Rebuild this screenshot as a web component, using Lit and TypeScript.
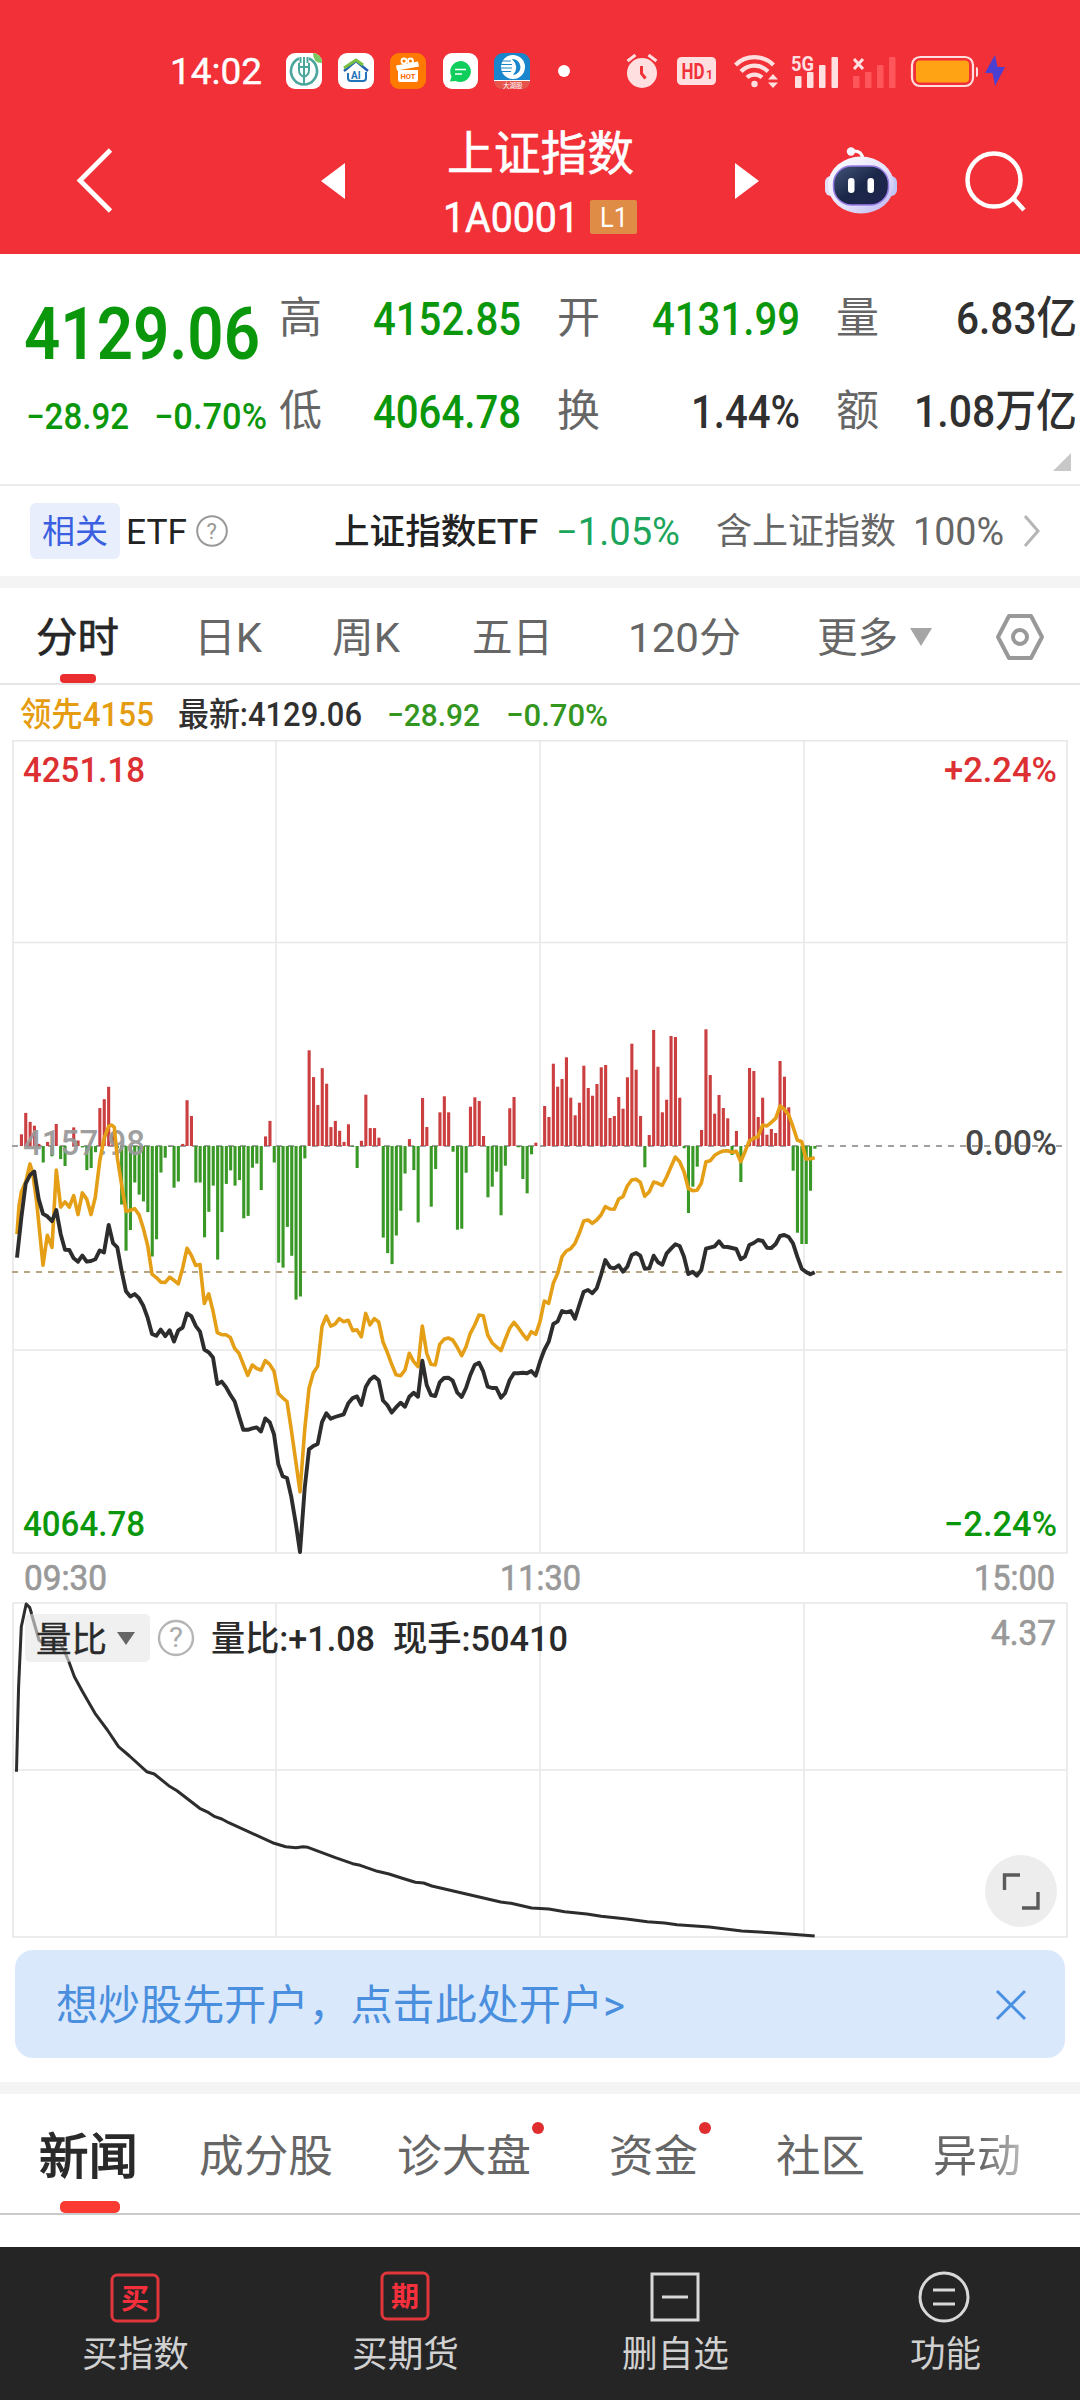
import { LitElement, html, svg, css } from "lit";
import { customElement } from "lit/decorators.js";

/* One line of text squeezed to a condensed width; the box is its cap height, baseline at the bottom. */
const line = (text: string, width: number, size: number, cls = "") => html`
  <svg class="line ${cls}" width=${width} height=${Math.round(size * 0.72)}>
    <text x="0" y=${Math.round(size * 0.72)} font-size=${size} textLength=${width} lengthAdjust="spacingAndGlyphs">${text}</text>
  </svg>`;

/* Text inside a chart, anchored at its left baseline. */
const label = (text: string, x: number, y: number, width: number, size: number, cls: string) => svg`
  <text class=${cls} x=${x} y=${y} font-size=${size} textLength=${width} lengthAdjust="spacingAndGlyphs">${text}</text>`;

const pairs = (s: string) => s.trim().split(/\s+/).map((p) => p.split(",").map(Number));

/* The session is stored in two segments, each with its own grid and origin. */
const MORNING = (x: number, y: number): [number, number] => [x / 3, 1020 + y / 2.904];
const MIDDAY = (x: number, y: number): [number, number] => [400 + x / 3, 1010 + y / 3];

const track = (a: string, b: string) =>
  [...pairs(a).map(([x, y]) => MORNING(x, y)), ...pairs(b).map(([x, y]) => MIDDAY(x, y))]
    .map(([x, y]) => `${x.toFixed(1)},${y.toFixed(1)}`)
    .join(" ");

const PRICE = track(
  `51,690 64,575 77,475 90,450 103,440 116,520 129,563 142,570 156,584 169,552 182,622 195,667 208,668 221,692 234,702 247,684 260,702 273,700 286,695 299,669 312,675 326,595 339,648 352,660 365,730 378,788 391,803 404,796 417,808 430,830 443,865 456,912 469,917 482,899 496,918 509,901 522,934 535,901 548,893 561,852 574,860 587,888 600,905 613,957 626,965 639,980 652,1057 665,1050 678,1066 691,1088 704,1108 717,1150 730,1190 743,1190 757,1186 770,1183 783,1195 796,1157 809,1168 822,1203 835,1290 848,1325 861,1330 874,1385 887,1460 900,1545 914,1360 927,1247 940,1237 953,1231 966,1168 979,1142 992,1158 1005,1153 1031,1145 1045,1113 1058,1098 1071,1093 1084,1118 1097,1066 1110,1045 1123,1035 1136,1046 1149,1105 1162,1118 1175,1140 1188,1125`,
  `2,1178 15,1190 28,1160 41,1148 54,1160 67,1052 80,1125 93,1155 106,1158 119,1117 132,1104 145,1103 158,1112 172,1148 185,1161 198,1134 211,1095 224,1065 237,1058 250,1085 263,1130 276,1134 289,1134 303,1163 315,1150 329,1110 342,1090 355,1090 368,1088 381,1090 394,1083 407,1097 420,1055 433,1020 446,995 460,942 473,934 486,903 499,907 512,903 525,926 538,885 551,845 564,840 577,850 590,835 603,795 616,750 630,772 643,775 656,766 669,785 682,770 695,735 708,729 721,737 734,776 748,775 761,737 774,757 787,764 800,730 813,716 826,703 839,708 852,740 865,792 878,785 891,797 904,780 918,716 944,709 957,694 970,710 983,711 1009,717 1022,748 1035,740 1048,705 1061,699 1074,690 1088,693 1101,713 1114,714 1127,702 1140,678 1153,675 1166,681 1179,700 1192,740 1205,776 1218,786 1231,793 1244,787`
);

const LEAD = track(
  `51,622 57,540 64,500 77,470 90,418 98,445 110,530 129,712 142,625 156,660 169,436 182,543 195,528 208,543 221,510 234,565 247,502 260,520 273,565 286,515 299,410 312,345 326,308 335,305 343,312 352,400 365,480 378,555 391,553 404,548 417,565 430,605 443,655 456,738 469,748 482,761 496,762 509,747 522,756 535,766 548,720 561,663 574,683 587,713 600,710 613,823 626,795 639,845 652,908 665,914 678,914 691,922 704,954 717,968 743,1032 757,1002 770,1012 783,1017 796,989 809,1000 822,1020 835,1085 848,1097 861,1108 874,1190 887,1280 900,1370 914,1190 927,1070 940,1025 953,1005 966,890 979,860 992,889 1005,883 1018,867 1031,876 1045,872 1058,902 1071,900 1084,920 1097,852 1110,885 1123,867 1136,877 1149,935 1162,965 1175,1000 1188,1030`,
  `2,1097 15,1080 28,1030 41,1055 54,1070 67,948 80,1030 93,1063 106,1065 119,1003 132,988 145,984 158,990 172,1012 185,1037 198,1010 211,970 224,945 237,915 250,917 263,975 276,998 289,1010 303,1022 315,990 329,955 342,937 355,953 368,972 381,988 394,965 407,973 420,935 433,873 446,880 460,820 473,790 486,740 499,723 512,716 525,700 538,670 551,633 564,630 577,640 590,630 603,615 616,590 630,597 643,598 656,567 669,560 682,528 695,510 708,508 721,517 734,559 748,545 761,516 774,520 787,526 800,500 813,470 826,441 839,455 852,485 865,535 878,542 891,541 904,520 918,455 931,452 944,436 957,428 970,423 983,422 996,427 1009,424 1022,455 1035,425 1048,393 1061,385 1074,380 1088,345 1101,348 1114,337 1127,325 1140,288 1153,298 1166,315 1179,350 1192,390 1205,395 1218,447 1231,446 1244,443`
);

const nums = (s: string) => s.trim().split(/\s+/).map(Number);
const MOMENTUM = [
  ...nums(`366 332 270 296 307 360 414 354 396 302 404 424 366 312 350 370 436 430 384 256 230 194 326 372 536 670 610 472 507 527 558 687 637 443 400 368 487 469 360 233 279 472 472 631 557 481 696 616 476 437 481 465 576 569 429 417 494 338 293 414 705 719 601 685 812 803 402 88 166 247 140 185 311 293 322 354 303 369 430 351 217 314 314 342 632 677 709 626 554 446 346 436 588`).map((v) => (v - 366) / 2.904),
  ...nums(`264 351 590 477 307 259 307 425 659 656 488 290 262 273 378 562 530 485 616 467 295 261 412 507 550 433 398 408 288 321 161 230 207 142 263 316 278 167 234 257 222 172 165 324 318 261 296 202 101 179 318 472 375 60 170 307 269 78 81 263 415 609 530 470 360 58 195 311 255 294 325 435 363 516 408 174 183 321 263 374 357 369 153 200 292 482 668 702 702 542 416`).map((v) => (v - 408) / 3),
];

const RATIO = pairs(`24,815 26,640 27,560 31,380 38,312 43,322 46,342`).map(([x, y]) => `${(x / 1.452).toFixed(1)},${(1500 + y / 3).toFixed(1)}`);
const RATIO_TAIL = pairs(`100,485 108,530 120,575 138,640 156,690 172,740 188,768 213,815 224,822 245,857 257,872 290,925 303,938 312,950 322,957 332,968 398,1030 415,1040 430,1043 440,1040 447,1042 487,1073 512,1091 523,1096 548,1114 565,1122 583,1134 603,1147 615,1149 627,1158 727,1206 742,1210 772,1224 797,1227 820,1235 852,1242 873,1249 910,1257 940,1265 965,1269 983,1274 1030,1281 1077,1293 1120,1298 1150,1303 1183,1308`)
  .map(([x, y]) => `${(x / 1.452).toFixed(1)},${(1500 + y / 3).toFixed(1)}`);

@customElement("status-bar")
class StatusBar extends LitElement {
  static styles = css`
    :host { display: grid; box-sizing: border-box; height: 118px; padding: 24px 0 0 170px; align-items: center;
      grid-template-columns: 116px 52px 52px 53px 51px 64px 68px 51px 57px 58px 61px 58px 74px 1fr;
      font-family: Roboto, "Noto Sans CJK SC", sans-serif; }
    svg { display: block; overflow: visible; }
    .line { fill: #fff; stroke: #fff; stroke-width: .4px; }
    .bold { font-weight: 700; }
  `;
  render() {
    return html`
      ${line("14:02", 92, 36)}
      <svg width="36" height="36"><rect width="36" height="36" rx="9" fill="#fff"/><path d="M27 0a9 9 0 0 1 9 9v1q-9 0-9-10" fill="#7cc860"/><g fill="none" stroke="#4aa69c"><path d="M13 5.500A13 13.500 0 1 0 23 5.500" stroke-width="2.600"/><path d="M18 4v28M14.500 4v6M21.500 4v6M13 10v7q0 5 5 7q5-2 5-7v-7M13 14h10" stroke-width="2"/></g></svg>
      <svg width="36" height="36"><rect width="36" height="36" rx="9" fill="#fff"/><g fill="none" stroke-linejoin="round"><path d="M6 18 18 8l12 10" stroke="#1f62b0" stroke-width="2.500"/><path d="m6 15 12-8 7 5" stroke="#7ac143" stroke-width="3"/><path d="M10 20v5q0 3 3 3h12q3 0 3-3v-6" stroke="#2273b9" stroke-width="2"/></g><text class="bold" x="13" y="25.500" font-size="10" fill="#2273b9">AI</text></svg>
      <svg width="36" height="36"><rect width="36" height="36" rx="9" fill="#ff7a00"/><g fill="none" stroke="#fff" stroke-width="1.800"><circle cx="14" cy="8" r="2.500"/><circle cx="20.500" cy="8" r="2.500"/></g><path d="m6 12.500 22-4 1 5-22 4zM8 17h20v10q0 2-2 2H10q-2 0-2-2z" fill="#fff"/><text class="bold" x="10.500" y="26" font-size="7.500" textLength="15" lengthAdjust="spacingAndGlyphs" fill="#ff6a00">HOT</text></svg>
      <svg width="35" height="36"><rect width="35" height="36" rx="9" fill="#fff"/><path d="M17.500 8a10.800 10.500 0 1 1-5 20L7 28.500l1.500-5A10.500 10.500 0 0 1 17.500 8z" fill="#0fce5b"/><path d="M12 16.500h11M12 21h7" stroke="#fff" stroke-width="1.600"/></svg>
      <svg width="36" height="36"><rect width="36" height="36" rx="9" fill="#1985cc"/><circle cx="19" cy="14" r="12" fill="#fff"/><path d="M18 6a7 7 0 0 1 1 16q7-8-1-16" fill="#1985cc"/><path d="M6 8h11M6 11.500h12M6 15h12M6 18.500h11" stroke="#1985cc" stroke-width="1.100"/><path d="M0 27h36q0 9-9 9H9q-9 0-9-9" fill="#e6544c"/><path d="M0 27.500h36" stroke="#fff"/><text x="9" y="34.500" font-size="6.500" fill="#fff">大湖股</text></svg>
      <svg width="12" height="12"><circle cx="6" cy="6" r="6" fill="#fff"/></svg>
      <svg width="32" height="34" fill="none"><circle cx="16" cy="19" r="15" fill="#ffdfe0"/><path d="m1.500 7 8-6M30.500 7l-8-6" stroke="#ffdfe0" stroke-width="3"/><path d="M15.500 12v7.500l4 5" stroke="#f23038" stroke-width="3"/></svg>
      <svg width="39" height="28"><rect width="39" height="28" rx="4.500" fill="#ffdfe0"/><text class="bold" x="4.500" y="22" font-size="22" textLength="23" lengthAdjust="spacingAndGlyphs" fill="#f23038">HD</text><text class="bold" x="29" y="22" font-size="12" fill="#f23038">1</text></svg>
      <svg width="45" height="34" fill="none" stroke="#ffdfe0" stroke-width="4.200"><path d="M1.500 11a27 27 0 0 1 38 0M7 17.500a18.500 18.500 0 0 1 27 0M13 23.500a11 11 0 0 1 15 0"/><circle cx="20.500" cy="30" r="3.200" fill="#ffdfe0" stroke="none"/><path d="m39 20 5 5.500H34zM39 34l5-5.500H34z" fill="#ffdfe0" stroke="none"/></svg>
      <svg width="46" height="33"><g fill="#ffdfe0"><text class="bold" x="-1" y="15.500" font-size="20" textLength="23" lengthAdjust="spacingAndGlyphs">5G</text><rect x="3" y="21" width="6.500" height="12" rx="1"/><rect x="15" y="17" width="6.500" height="16" rx="1"/><rect x="27" y="10" width="6.500" height="23" rx="1"/><rect x="39.500" y="2" width="6.500" height="31" rx="1"/></g></svg>
      <svg width="43" height="33"><path d="m1 4 9 10M10 4 1 14" stroke="#ffdfe0" stroke-width="3"/><g fill="#ff565c"><rect y="21" width="6.500" height="12" rx="1"/><rect x="12" y="17" width="6.500" height="16" rx="1"/><rect x="24" y="10" width="6.500" height="23" rx="1"/><rect x="36" y="2" width="6.500" height="31" rx="1"/></g></svg>
      <svg width="68" height="31"><rect x="1" y="1" width="61" height="29" rx="8" fill="none" stroke="#ffdfe0" stroke-width="2.200"/><rect x="5" y="4.500" width="53" height="22" rx="4" fill="#ffa214"/><path d="M65 11q2 0 2 2v6q0 2-2 2z" fill="#ffdfe0"/></svg>
      <svg width="20" height="32"><path d="M10 0 0 18h7.500L10 31 20 12h-7.500z" fill="#4b40d2"/></svg>
    `;
  }
}

@customElement("title-bar")
class TitleBar extends LitElement {
  static styles = css`
    :host { display: grid; box-sizing: border-box; height: 136px; padding: 0 0 10px 77px; align-items: center;
      grid-template-columns: 244px 24px 390px 90px 140px 1fr;
      font-family: Roboto, "Noto Sans CJK SC", sans-serif; }
    svg { display: block; overflow: visible; }
    .line { fill: #fff; }
    .medium { stroke: #fff; stroke-width: .6px; }
    .names { display: flex; flex-direction: column; align-items: center; align-self: start; padding-top: 18px; gap: 30px; }
    .code { display: flex; align-items: center; gap: 11px; }
    .level { display: flex; align-items: center; justify-content: center; width: 47px; height: 34px; background: #df8c47; border-radius: 2px; }
  `;
  render() {
    return html`
      <svg width="36" height="64" fill="none" stroke="#fff" stroke-width="4.800"><path d="M33.500 1 3 31.500 33.500 62"/></svg>
      <svg width="24" height="36"><path d="M24 0v36L0 18z" fill="#fff"/></svg>
      <div class="names">
        ${line("上证指数", 187, 47, "medium")}
        <div class="code">${line("1A0001", 136, 42, "medium")}<div class="level">${line("L1", 28, 27)}</div></div>
      </div>
      <svg width="24" height="36"><path d="M0 0v36l24-18z" fill="#fff"/></svg>
      <svg width="72" height="68" viewBox="0 0 72 68">
        <defs>
          <linearGradient id="shell" x1="0" y1="0" x2="1" y2="1"><stop offset="0" stop-color="#fff"/><stop offset=".55" stop-color="#e6e3fb"/><stop offset="1" stop-color="#b9b2ef"/></linearGradient>
          <linearGradient id="visor" x1="0" y1="0" x2="1" y2="1"><stop offset="0" stop-color="#43567a"/><stop offset=".5" stop-color="#1b2748"/><stop offset="1" stop-color="#20234f"/></linearGradient>
        </defs>
        <path d="M27 4q10-1 11 8" fill="none" stroke="#fff" stroke-width="3"/><circle cx="26" cy="4.500" r="4.200" fill="#f6f4ff"/>
        <rect x="0" y="29" width="12" height="20" rx="6" fill="#e4def9"/><rect x="60" y="29" width="12" height="20" rx="6" fill="#bfc6f5"/>
        <ellipse cx="36" cy="38" rx="33" ry="28.500" fill="url(#shell)"/>
        <rect x="8.500" y="19" width="55" height="39" rx="18" fill="url(#visor)" stroke="#9a7ee8" stroke-width="1.500"/>
        <rect x="23" y="31" width="6.500" height="15" rx="3.200" fill="#fff"/><rect x="42.500" y="31" width="6.500" height="15" rx="3.200" fill="#fff"/>
      </svg>
      <svg width="60" height="60" fill="none" stroke="#fff" stroke-width="4.500"><circle cx="29" cy="29" r="26.500"/><path d="m48 47 11 12"/></svg>
    `;
  }
}

@customElement("quote-panel")
class QuotePanel extends LitElement {
  static styles = css`
    :host { display: block; box-sizing: border-box; height: 232px; border-bottom: 2px solid #ececec;
      font-family: Roboto, "Noto Sans CJK SC", sans-serif; font-weight: 500; }
    svg { display: block; overflow: visible; }
    .top { display: flex; height: 174px; }
    .last { width: 255px; padding: 52px 0 0 24px; }
    .change { display: flex; gap: 25px; padding: 44px 0 0 2px; }
    .grid { display: grid; padding-top: 48px; grid-template-columns: 41px 201px 36px 41px 202px 36px 41px 200px; grid-template-rows: 33px 33px; row-gap: 60px; }
    .num { justify-self: end; }
    .k { fill: #666; font-weight: 400; }
    .g { fill: #0b970b; }
    .d { fill: #303030; }
    .bold { font-weight: 600; }
    .c4 { grid-column: 4; } .c7 { grid-column: 7; }
    .corner { display: flex; justify-content: flex-end; padding: 25px 9px 0 0; }
  `;
  render() {
    return html`
      <div class="top">
        <div class="last">
          ${line("4129.06", 236, 73, "g bold")}
          <div class="change">${line("−28.92", 103, 36, "g")}${line("−0.70%", 113, 36, "g")}</div>
        </div>
        <div class="grid">
          ${line("高", 43, 43, "k")}${line("4152.85", 148, 46, "g num")}
          ${line("开", 43, 43, "k c4")}${line("4131.99", 148, 46, "g num")}
          ${line("量", 43, 43, "k c7")}${line("6.83亿", 121, 45, "d num")}
          ${line("低", 43, 43, "k")}${line("4064.78", 148, 46, "g num")}
          ${line("换", 43, 43, "k c4")}${line("1.44%", 109, 46, "d num")}
          ${line("额", 43, 43, "k c7")}${line("1.08万亿", 163, 45, "d num")}
        </div>
      </div>
      <div class="corner"><svg width="18" height="18"><path d="M18 0v18H0z" fill="#c8c8c8"/></svg></div>
    `;
  }
}

@customElement("etf-row")
class EtfRow extends LitElement {
  static styles = css`
    :host { display: grid; box-sizing: border-box; height: 90px; padding-left: 30px; align-items: center;
      grid-template-columns: 96px 70px 138px 222px 160px 197px 110px 1fr;
      font-family: Roboto, "Noto Sans CJK SC", sans-serif; }
    svg { display: block; overflow: visible; }
    .badge { display: flex; align-items: center; justify-content: center; width: 90px; height: 56px; background: #e8eefc; border-radius: 6px; }
    .blue { fill: #3a5fe0; }
    .d { fill: #222; }
    .m { font-weight: 500; }
    .g { fill: #1ba55b; }
    .k { fill: #666; }
  `;
  render() {
    return html`
      <div class="badge">${line("相关", 66, 33, "blue")}</div>
      ${line("ETF", 61, 35, "d")}
      <svg width="32" height="32" fill="none"><circle cx="16" cy="16" r="14.800" stroke="#999" stroke-width="2"/><text x="10.500" y="24" font-size="22" fill="#999">?</text></svg>
      ${line("上证指数ETF", 204, 35, "d m")}
      ${line("−1.05%", 124, 38, "g")}
      ${line("含上证指数", 180, 36, "k")}
      ${line("100%", 91, 38, "k")}
      <svg width="18" height="32" fill="none"><path d="m2 1 13 15L2 31" stroke="#b5b5b5" stroke-width="3"/></svg>
    `;
  }
}

@customElement("period-tabs")
class PeriodTabs extends LitElement {
  static styles = css`
    :host { display: grid; box-sizing: border-box; height: 97px; padding: 2px 0 0 36px; align-items: center; border-bottom: 2px solid #e6e6e6; position: relative;
      grid-template-columns: 158px 138px 140px 156px 189px 93px 86px 1fr;
      font-family: Roboto, "Noto Sans CJK SC", sans-serif; }
    svg { display: block; overflow: visible; }
    .k { fill: #666; }
    .on { fill: #262626; stroke: #262626; stroke-width: .7px; }
    .mark { position: absolute; left: 60px; bottom: 0; width: 36px; height: 9px; border-radius: 4px; background: #ea2d2f; }
  `;
  render() {
    return html`
      ${line("分时", 83, 41, "on")}${line("日K", 68, 41, "k")}${line("周K", 68, 41, "k")}${line("五日", 81, 41, "k")}${line("120分", 113, 41, "k")}${line("更多", 81, 41, "k")}
      <svg width="22" height="18"><path d="M0 0h22L11 18z" fill="#a5a5a5"/></svg>
      <svg width="48" height="46" fill="none" stroke="#999" stroke-width="4" stroke-linejoin="round"><path d="M13 2h22l11 21-11 21H13L2 23z"/><circle cx="24" cy="23" r="7"/></svg>
      <div class="mark"></div>
    `;
  }
}

@customElement("chart-legend")
class ChartLegend extends LitElement {
  static styles = css`
    :host { display: grid; box-sizing: border-box; height: 55px; padding: 0 0 14px 20px; align-items: end;
      grid-template-columns: 158px 209px 119px 1fr;
      font-family: Roboto, "Noto Sans CJK SC", sans-serif; font-weight: 500; }
    svg { display: block; overflow: visible; }
    .y { fill: #e59c10; } .d { fill: #303030; } .g { fill: #35961f; }
  `;
  render() {
    return html`${line("领先4155", 134, 33, "y")}${line("最新:4129.06", 184, 33, "d")}${line("−28.92", 93, 32, "g")}${line("−0.70%", 102, 32, "g")}`;
  }
}

@customElement("price-chart")
class PriceChart extends LitElement {
  static styles = css`
    :host { display: block; font-family: Roboto, "Noto Sans CJK SC", sans-serif; font-weight: 500; }
    svg { display: block; }
    .frame { fill: none; stroke: #e8e8e8; stroke-width: 1.6; }
    .up { fill: #cc3f40; } .down { fill: #3a9827; }
    .zero { stroke: #a0a0a0; stroke-width: 2; stroke-dasharray: 6 6; }
    .avg { stroke: #b8a583; stroke-width: 2; stroke-dasharray: 6 6; }
    .price { fill: none; stroke: #2d2d2d; stroke-width: 3.9; stroke-linejoin: round; }
    .lead { fill: none; stroke: #e49f17; stroke-width: 3.6; stroke-linejoin: round; }
    .r { fill: #dd3033; } .g { fill: #0b970b; } .d { fill: #484848; } .mid { fill: #999; fill-opacity: .95; }
  `;
  render() {
    return html`<svg width="1080" height="814" viewBox="0 740 1080 814">
      <path class="frame" d="M13 740.800H1067V1553H13zM13 942.500H1067M13 1350H1067M276 741V1553M540 741V1553M804 741V1553"/>
      <path class="zero" d="M12 1146H1062"/>
      <path class="avg" d="M12 1272H1062"/>
      ${MOMENTUM.map((h, i) => svg`<rect class=${h < 0 ? "up" : "down"} x=${(15.5 + i * 4.36).toFixed(1)} y=${(1146 + Math.min(h, 0)).toFixed(1)} width="3.100" height=${Math.abs(h).toFixed(1)}/>`)}
      ${label("4157.98", 23, 1155, 122, 35, "mid")}
      <polyline class="lead" points=${LEAD}/>
      <polyline class="price" points=${PRICE}/>
      ${label("4251.18", 23, 782, 122, 35, "r")}
      ${label("+2.24%", 944, 782, 113, 35, "r")}
      ${label("0.00%", 965, 1155, 92, 35, "d")}
      ${label("4064.78", 23, 1536, 122, 35, "g")}
      ${label("−2.24%", 944, 1536, 113, 35, "g")}
    </svg>`;
  }
}

@customElement("time-axis")
class TimeAxis extends LitElement {
  static styles = css`
    :host { display: flex; box-sizing: border-box; height: 48px; padding: 0 25px 12px 24px; justify-content: space-between; align-items: end;
      font-family: Roboto, sans-serif; }
    svg { display: block; overflow: visible; fill: #999; stroke: #999; stroke-width: .7px; }
  `;
  render() {
    return html`${line("09:30", 83, 35)}${line("11:30", 81, 35)}${line("15:00", 81, 35)}`;
  }
}

@customElement("ratio-chart")
class RatioChart extends LitElement {
  static styles = css`
    :host { display: block; font-family: Roboto, "Noto Sans CJK SC", sans-serif; }
    svg { display: block; }
    .frame { fill: none; stroke: #e8e8e8; stroke-width: 1.6; }
    .curve { fill: none; stroke: #2d2d2d; stroke-width: 3; stroke-linejoin: round; }
    .faint { fill: none; stroke: #9c9c9c; stroke-width: 3; stroke-linejoin: round; }
    .box { fill: #f0f0f0; }
    .d { fill: #2a2a2a; stroke: #2a2a2a; stroke-width: .4px; } .k { fill: #999; stroke: #999; stroke-width: .7px; } .m { fill: #2a2a2a; font-weight: 500; }
    .hint { fill: #aaa; }
    .ring { fill: none; stroke: #b5b5b5; stroke-width: 2.4; }
    .round { fill: #ededed; }
    .bracket { fill: none; stroke: #5a5a5a; stroke-width: 3.4; }
  `;
  render() {
    return html`<svg width="1080" height="336" viewBox="0 1602 1080 336">
      <path class="frame" d="M13 1603H1067V1937H13zM13 1770H1067M276 1603V1937M540 1603V1937M804 1603V1937"/>
      <rect class="box" x="25" y="1614" width="125" height="48" rx="5"/>
      <polyline class="faint" points="31.500,1614 35,1626 39,1640 44,1644 60,1644 64,1650 69,1662"/>
      <polyline class="curve" points=${RATIO.join(" ")}/>
      <polyline class="curve" points=${RATIO_TAIL.join(" ")}/>
      ${label("量比", 36, 1652, 71, 35, "d")}
      <path d="M117 1632h18l-9 13z" fill="#666"/>
      <circle class="ring" cx="176" cy="1638" r="17"/>
      ${label("?", 169, 1647, 14, 27, "hint")}
      ${label("量比:+1.08", 211, 1651, 164, 35, "m")}
      ${label("现手:50410", 393, 1651, 175, 35, "m")}
      ${label("4.37", 991, 1645, 65, 35, "k")}
      <circle class="round" cx="1021" cy="1891" r="36"/>
      <path class="bracket" d="M1004.500 1890V1875H1020M1022 1908H1038V1892"/>
    </svg>`;
  }
}

@customElement("open-banner")
class OpenBanner extends LitElement {
  static styles = css`
    :host { display: flex; box-sizing: border-box; margin: 12px 15px 24px; height: 108px; padding: 2px 39px 0 41px; align-items: center; justify-content: space-between;
      border-radius: 18px; background: #dae8fb; font-family: Roboto, "Noto Sans CJK SC", sans-serif; }
    svg { display: block; overflow: visible; fill: #4a8ede; }
  `;
  render() {
    return html`${line("想炒股先开户，点击此处开户>", 569, 42)}
      <svg width="30" height="30"><path d="m1 1 28 28M29 1 1 29" fill="none" stroke="#4a90e2" stroke-width="3"/></svg>`;
  }
}

@customElement("news-tabs")
class NewsTabs extends LitElement {
  static styles = css`
    :host { display: grid; position: relative; box-sizing: border-box; height: 121px; padding: 5px 0 0 39px; align-items: center; border-bottom: 2px solid #cacaca;
      grid-template-columns: 160px 198px 212px 167px 157px 1fr;
      font-family: Roboto, "Noto Sans CJK SC", sans-serif; }
    svg { display: block; overflow: visible; }
    .k { fill: #666; }
    .on { fill: #2a2a2a; stroke: #2a2a2a; stroke-width: 1.5px; }
    .tab { position: relative; width: fit-content; }
    .dot::after { content: ""; position: absolute; right: -13px; top: -18px; width: 12px; height: 12px; border-radius: 50%; background: #e02d2f; }
    .last { padding: 16px 0; mask-image: linear-gradient(90deg, #000 55%, rgba(0, 0, 0, .45)); }
    .mark { position: absolute; left: 60px; bottom: 0; width: 60px; height: 12px; border-radius: 5px; background: #fb3a32; }
  `;
  render() {
    return html`
      <div class="tab">${line("新闻", 99, 49, "on")}</div>
      <div class="tab">${line("成分股", 134, 44, "k")}</div>
      <div class="tab dot">${line("诊大盘", 134, 44, "k")}</div>
      <div class="tab dot">${line("资金", 89, 44, "k")}</div>
      <div class="tab">${line("社区", 89, 44, "k")}</div>
      <div class="tab last">${line("异动", 88, 44, "k")}</div>
      <div class="mark"></div>
    `;
  }
}

@customElement("action-bar")
class ActionBar extends LitElement {
  static styles = css`
    :host { display: grid; grid-template-columns: repeat(4, 1fr); box-sizing: border-box; height: 154px; margin-top: 32px; padding-top: 24px; background: #252525;
      font-family: Roboto, "Noto Sans CJK SC", sans-serif; }
    svg { display: block; overflow: visible; }
    .item { display: flex; flex-direction: column; align-items: center; gap: 18px; }
    .line { fill: #d0d0d0; }
    .glyph { font-weight: 700; font-size: 28px; fill: #f5303c; }
    .w { fill: none; stroke: #d8d8d8; stroke-width: 3; }
    .r { fill: none; stroke: #e2363d; stroke-width: 3; }
  `;
  render() {
    return html`
      <div class="item"><svg width="50" height="52"><rect class="r" x="2" y="4" width="46" height="46" rx="5"/><text class="glyph" x="11" y="37.500">买</text></svg>${line("买指数", 107, 36)}</div>
      <div class="item"><svg width="50" height="52"><rect class="r" x="2" y="2" width="46" height="46" rx="5"/><text class="glyph" x="11" y="35.500">期</text></svg>${line("买期货", 107, 36)}</div>
      <div class="item"><svg width="50" height="52"><path class="w" d="M2 3h46v46H2zM12 26h26"/></svg>${line("删自选", 107, 36)}</div>
      <div class="item"><svg width="52" height="52"><circle class="w" cx="25" cy="26" r="24"/><path class="w" d="M14 19h22M14 33h22"/></svg>${line("功能", 71, 36)}</div>
    `;
  }
}

@customElement("app-root")
class AppRoot extends LitElement {
  static styles = css`
    :host { display: block; width: 1080px; height: 2400px; overflow: hidden; background: #fff; }
    .head { background: #f23037; }
    .band { height: 12px; background: #f4f4f4; }
  `;
  render() {
    return html`
      <div class="head"><status-bar></status-bar><title-bar></title-bar></div>
      <quote-panel></quote-panel>
      <etf-row></etf-row>
      <div class="band"></div>
      <period-tabs></period-tabs>
      <chart-legend></chart-legend>
      <price-chart></price-chart>
      <time-axis></time-axis>
      <ratio-chart></ratio-chart>
      <open-banner></open-banner>
      <div class="band"></div>
      <news-tabs></news-tabs>
      <action-bar></action-bar>
    `;
  }
}
